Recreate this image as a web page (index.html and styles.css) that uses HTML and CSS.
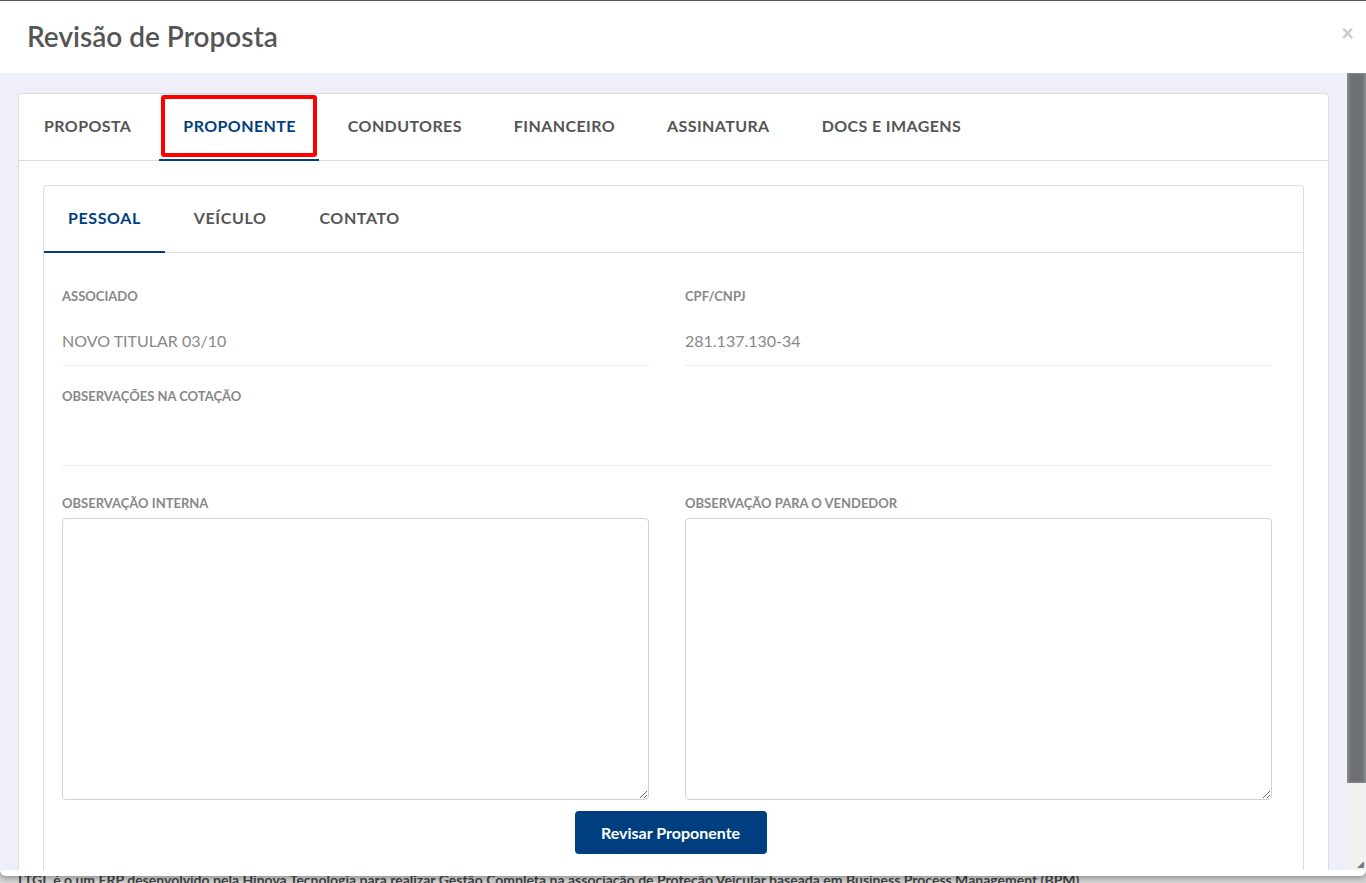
FILE: index.html
```html
<!DOCTYPE html>
<html lang="pt-BR">
<head>
    <meta charset="UTF-8">
    <meta name="viewport" content="width=device-width, initial-scale=1.0">
    <title>Revisão de Proposta</title>
    <link rel="stylesheet" href="styles.css">
</head>
<body>
    <div class="modal">
        <div class="modal-header">
            <h2 class="modal-title">Revisão de Proposta</h2>
            <span class="modal-close">&times;</span>
        </div>

        <div class="modal-body">
            <div class="modal-scroll">
                <div class="card">
                    <ul class="tabs">
                        <li class="tab">PROPOSTA</li>
                        <li class="tab active">PROPONENTE<span class="highlight"></span></li>
                        <li class="tab">CONDUTORES</li>
                        <li class="tab">FINANCEIRO</li>
                        <li class="tab">ASSINATURA</li>
                        <li class="tab">DOCS E IMAGENS</li>
                    </ul>

                    <div class="card-body">
                        <div class="card inner">
                            <ul class="tabs sub">
                                <li class="tab active">PESSOAL</li>
                                <li class="tab">VEÍCULO</li>
                                <li class="tab">CONTATO</li>
                            </ul>

                            <div class="form">
                                <div class="field">
                                    <div class="label">ASSOCIADO</div>
                                    <div class="value">NOVO TITULAR 03/10</div>
                                </div>
                                <div class="field">
                                    <div class="label">CPF/CNPJ</div>
                                    <div class="value">281.137.130-34</div>
                                </div>
                                <div class="field full">
                                    <div class="label">OBSERVAÇÕES NA COTAÇÃO</div>
                                    <div class="value"></div>
                                </div>
                                <div class="field area">
                                    <div class="label">OBSERVAÇÃO INTERNA</div>
                                    <textarea class="textarea"></textarea>
                                </div>
                                <div class="field area">
                                    <div class="label">OBSERVAÇÃO PARA O VENDEDOR</div>
                                    <textarea class="textarea"></textarea>
                                </div>
                            </div>

                            <div class="actions">
                                <button class="btn-primary">Revisar Proponente</button>
                            </div>
                        </div>
                    </div>
                </div>
            </div>

            <div class="scrollbar">
                <div class="scroll-thumb"></div>
                <div class="scroll-track"><span class="grip">&#9698;</span></div>
            </div>
        </div>
        <div class="modal-footer"></div>
    </div>

    <div class="page-behind">
        LTGI. é o um ERP desenvolvido pela Hinova Tecnologia para realizar Gestão Completa na associação de Proteção Veicular baseada em Business Process Management (BPM)
    </div>
</body>
</html>
```

FILE: styles.css
```css
body {
    margin: 0;
    font-family: Lato, "Open Sans", sans-serif;
    background: #d6d6d6;
    height: 883px;
    overflow: hidden;
}
.modal {
    background: #fff;
    border-top: 1px solid #555;
    border-radius: 0 0 6px 6px;
    box-shadow: 0 2px 6px rgba(0, 0, 0, 0.35);
    position: relative;
    z-index: 1;
}
.modal-header {
    height: 72px;
    display: flex;
    align-items: center;
    justify-content: space-between;
    padding: 0 12px 0 27px;
}
.modal-title {
    margin: 0 0 2px;
    font-size: 28px;
    font-weight: 600;
    color: #555;
}
.modal-close {
    font-size: 22px;
    font-weight: bold;
    color: #c8c8c8;
    margin-top: -10px;
}
.modal-body {
    display: flex;
    height: 797px;
    background: #efeff9;
}
.modal-scroll {
    flex: 1;
    overflow: hidden;
    padding: 20px 18px 0 18px;
}
.modal-footer {
    height: 6px;
}
.card {
    background: #fff;
    border: 1px solid #ddd;
    border-bottom: none;
    border-radius: 4px 4px 0 0;
    height: 100%;
    box-sizing: border-box;
}
.tabs {
    list-style: none;
    margin: 0;
    padding: 0 0 0 1px;
    display: flex;
    gap: 5px;
    height: 66px;
    border-bottom: 1px solid #ddd;
}
.tab {
    position: relative;
    display: flex;
    align-items: center;
    padding: 0 23px 3px 24px;
    font-size: 16px;
    font-weight: bold;
    letter-spacing: 0.4px;
    color: #555;
}
.tab.active {
    color: #003f7f;
    border-bottom: 2px solid #003f7f;
    margin-bottom: -1px;
}
.highlight {
    position: absolute;
    left: 2px;
    right: 2px;
    top: 1px;
    bottom: 2px;
    border: 4px solid #ff0000;
    border-radius: 3px;
}
.tabs.sub {
    padding-left: 0;
}
.tabs.sub .tab {
    letter-spacing: 0.6px;
    padding-right: 24px;
}
.card-body {
    padding: 24px 24px 0 24px;
    height: calc(100% - 67px);
    box-sizing: border-box;
}
.card.inner {
    border-radius: 4px 4px 0 0;
}
.form {
    display: grid;
    grid-template-columns: 1fr 1fr;
    column-gap: 36px;
    padding: 35px 31px 0 18px;
}
.field.full {
    grid-column: 1 / 3;
    margin-top: 22px;
}
.field.area {
    margin-top: 29px;
}
.label {
    font-size: 13px;
    line-height: 16px;
    font-weight: bold;
    color: #888;
}
.value {
    margin-top: 25px;
    padding-bottom: 12px;
    min-height: 24px;
    line-height: 24px;
    font-size: 16px;
    color: #888;
    border-bottom: 1px solid #eee;
}
.textarea {
    display: block;
    box-sizing: border-box;
    width: 100%;
    height: 282px;
    margin-top: 7px;
    border: 1px solid #d2d2d2;
    border-radius: 4px;
    font-family: inherit;
}
.actions {
    display: flex;
    justify-content: center;
    padding: 11px 6px 0 0;
}
.btn-primary {
    width: 192px;
    height: 43px;
    background: #003f7f;
    color: #fff;
    border: none;
    border-radius: 4px;
    font-family: inherit;
    font-size: 16px;
    font-weight: bold;
}
.scrollbar {
    width: 19px;
    display: flex;
    flex-direction: column;
    background: #f1f1f1;
}
.scroll-thumb {
    height: 710px;
    background: #6d7174;
    box-shadow: inset 2px 0 3px #8a8e91, inset -2px 0 3px #8a8e91;
}
.scroll-track {
    flex: 1;
    display: flex;
    align-items: flex-end;
    justify-content: flex-end;
}
.grip {
    font-size: 9px;
    color: #777;
    line-height: 9px;
    margin: 0 2px 2px 0;
}
.page-behind {
    margin-top: -5px;
    padding-left: 18px;
    font-size: 14px;
    font-weight: bold;
    color: #444;
    white-space: nowrap;
}
```
